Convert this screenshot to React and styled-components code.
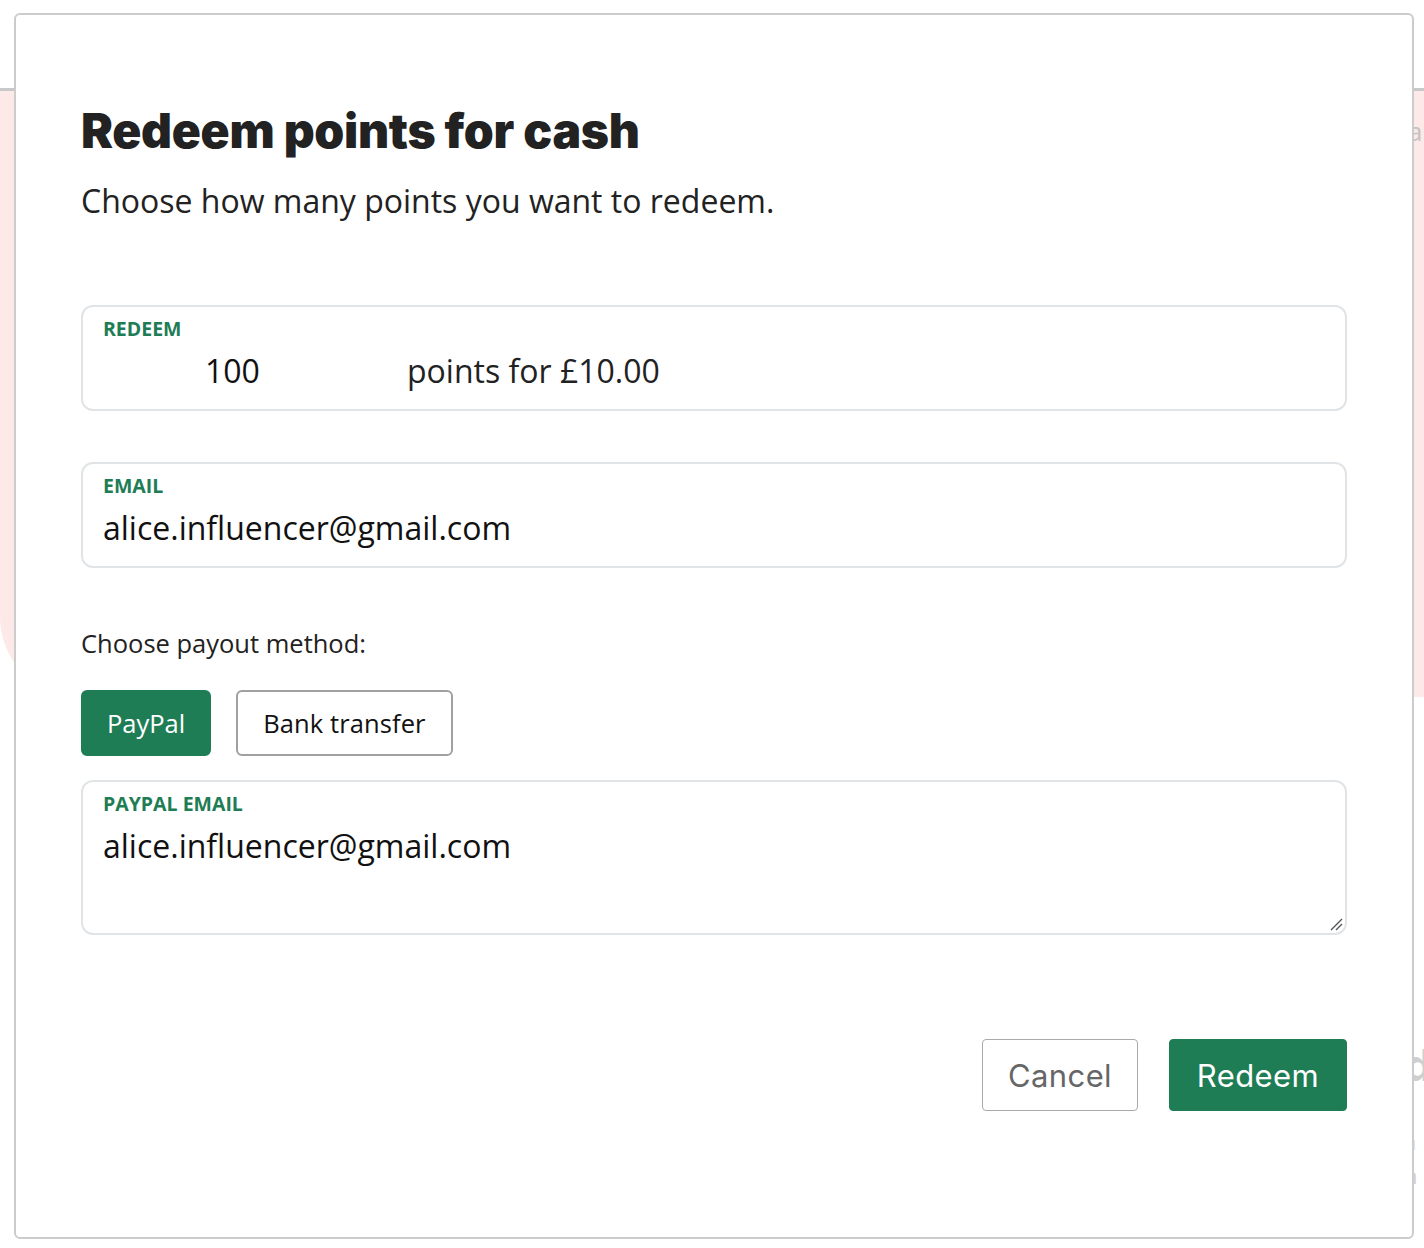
import React from 'react'
import styled, { createGlobalStyle } from 'styled-components'

const GlobalStyle = createGlobalStyle`
    html, body {
        margin: 0;
        padding: 0;
        background: #ffffff;
        font-family: "Open Sans", "Noto Sans", sans-serif;
    }
`;

const Pagina = styled.div`
    position: relative;
    width: 1424px;
    height: 1248px;
    overflow: hidden;
    background: #ffffff;
`;

const Cabecera = styled.div`
    height: 88px;
    border-bottom: 3px solid #c8c8c8;
`;

const Hero = styled.div`
    height: 584px;
    background: #fde9e7;
    border-bottom-left-radius: 80px;
    padding: 22px 0 0 1408px;
    color: #c4c4c4;
    font-size: 26px;
`;

const Fondo = styled.div`
    display: flex;
    flex-direction: column;
    padding: 343px 0 0 1404px;
    color: #cfcfcf;
    font-size: 22px;
    line-height: 34px;
    h3 {
        margin: 0;
        font-family: "Inter", sans-serif;
        font-size: 44px;
        line-height: 50px;
    }
`;

const Pie = styled.div`
    display: flex;
    gap: 560px;
    padding: 70px 0 0 550px;
`;

const Mancha = styled.span`
    width: 40px;
    height: 10px;
    background: #fde3e1;
`;

const Modal = styled.div`
    position: absolute;
    left: 14px;
    top: 13px;
    width: 1400px;
    height: 1226px;
    box-sizing: border-box;
    background: #ffffff;
    border: 2px solid #cccccc;
    border-radius: 6px;
    padding: 87px 65px 0 65px;
    display: flex;
    flex-direction: column;
`;

const Titulo = styled.h2`
    margin: 0;
    font-family: "Inter", sans-serif;
    font-weight: 900;
    font-size: 48px;
    line-height: 1.2;
    color: #222222;
    letter-spacing: -0.3px;
`;

const Subtitulo = styled.p`
    margin: 20px 0 0 0;
    font-size: 32px;
    line-height: 1.3;
    color: #222222;
`;

const Campo = styled.label`
    display: flex;
    flex-direction: column;
    box-sizing: border-box;
    border: 2px solid #e1e4e7;
    border-radius: 12px;
    padding: 10px 20px 0 20px;
    height: ${(p) => p.$alto || 106}px;
    margin-top: ${(p) => p.$margen || 0}px;
    position: relative;
`;

const Etiqueta = styled.span`
    font-size: 19.5px;
    font-weight: 700;
    color: #1e7d55;
    text-transform: uppercase;
    line-height: 24px;
`;

const Fila = styled.div`
    display: flex;
    align-items: center;
    margin-top: 10px;
    font-size: 32px;
    line-height: 40px;
    color: #222222;
`;

const Numero = styled.span`
    width: 202px;
    padding-left: 102px;
    color: #111111;
`;

const Valor = styled.span`
    margin-top: 8px;
    font-size: 32px;
    line-height: 44px;
    color: #111111;
`;

const Asa = styled.svg`
    position: absolute;
    right: 2px;
    bottom: 2px;
`;

const Pregunta = styled.p`
    margin: 58px 0 0 0;
    font-size: 25.5px;
    line-height: 34px;
    color: #222222;
`;

const Metodos = styled.div`
    display: flex;
    gap: 25px;
    margin-top: 30px;
    margin-bottom: 24px;
`;

const Metodo = styled.button`
    height: 66px;
    box-sizing: border-box;
    padding: 0 ${(p) => (p.$activo ? 24 : 25)}px;
    border-radius: 6px;
    font-family: "Open Sans", sans-serif;
    font-size: 25.5px;
    letter-spacing: ${(p) => (p.$activo ? 0 : 0.1)}px;
    cursor: pointer;
    background: ${(p) => (p.$activo ? '#1e7d55' : '#ffffff')};
    color: ${(p) => (p.$activo ? '#ffffff' : '#111111')};
    border: 2px solid ${(p) => (p.$activo ? '#1e7d55' : '#a0a0a0')};
`;

const Acciones = styled.div`
    display: flex;
    justify-content: flex-end;
    gap: 31px;
    margin-top: 104px;
`;

const Boton = styled.button`
    height: 72px;
    box-sizing: border-box;
    padding: 0;
    border-radius: 4px;
    font-family: "Inter", sans-serif;
    font-size: 31px;
    letter-spacing: 0.4px;
    cursor: pointer;
    background: ${(p) => (p.$primario ? '#1e7d55' : '#ffffff')};
    color: ${(p) => (p.$primario ? '#ffffff' : '#666666')};
    border: 1px solid ${(p) => (p.$primario ? '#1e7d55' : '#aaaaaa')};
    width: ${(p) => (p.$primario ? 178 : 156)}px;
`;

const App = () => {
    return (
        <Pagina>
            <GlobalStyle />
            <Cabecera />
            <Hero>a</Hero>
            <Fondo>
                <h3>d</h3>
                <span>c</span>
                <span>a</span>
                <span>n</span>
            </Fondo>
            <Pie>
                <Mancha />
                <Mancha />
            </Pie>
            <Modal>
                <Titulo>Redeem points for cash</Titulo>
                <Subtitulo>Choose how many points you want to redeem.</Subtitulo>

                <Campo $margen={84}>
                    <Etiqueta>Redeem</Etiqueta>
                    <Fila>
                        <Numero>100</Numero>
                        <span>points for £10.00</span>
                    </Fila>
                </Campo>

                <Campo $margen={51}>
                    <Etiqueta>Email</Etiqueta>
                    <Valor>alice.influencer@gmail.com</Valor>
                </Campo>

                <Pregunta>Choose payout method:</Pregunta>
                <Metodos>
                    <Metodo $activo>PayPal</Metodo>
                    <Metodo>Bank transfer</Metodo>
                </Metodos>

                <Campo $alto={155}>
                    <Etiqueta>PayPal email</Etiqueta>
                    <Valor>alice.influencer@gmail.com</Valor>
                    <Asa width="14" height="14" viewBox="0 0 14 14">
                        <path d="M13 2 L2 13 M13 7 L7 13" stroke="#555" strokeWidth="1.4" fill="none" />
                    </Asa>
                </Campo>

                <Acciones>
                    <Boton>Cancel</Boton>
                    <Boton $primario>Redeem</Boton>
                </Acciones>
            </Modal>
        </Pagina>
    )
}

export default App
